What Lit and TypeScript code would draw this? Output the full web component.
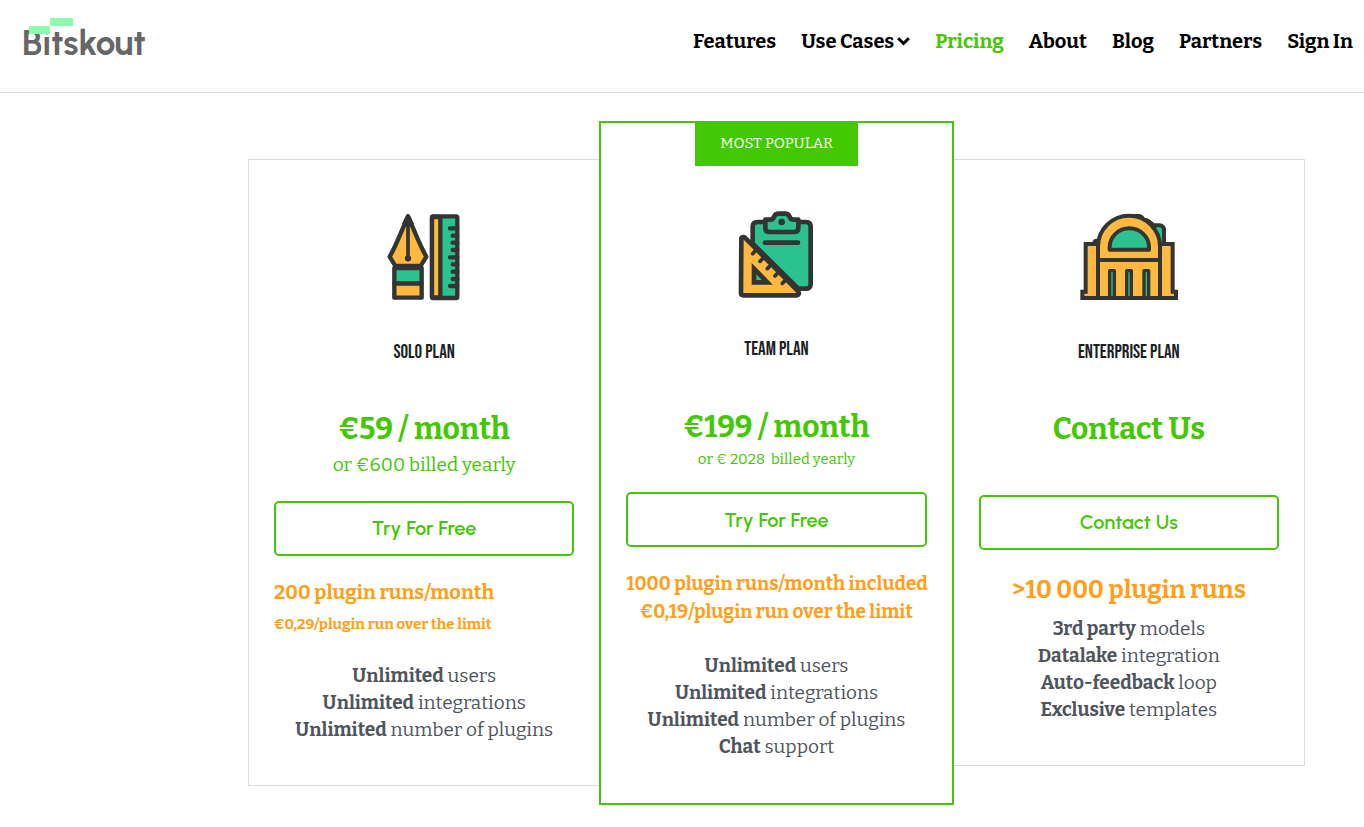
import { LitElement, html, svg, css, nothing, TemplateResult } from "lit";
import { customElement, property } from "lit/decorators.js";

interface Plan {
  id: string;
  name: string;
  badge?: string;
  icon: TemplateResult;
  price: string;
  billing?: string;
  action: string;
  notes: string[];
  features: [string, string][];
}

const INK = "#333533";
const GREEN = "#2bc28f";
const AMBER = "#ffb940";

const penIcon = svg`
  <svg class="art" viewBox="13 21 300 300" aria-hidden="true" stroke="${INK}" stroke-width="13" stroke-linejoin="round" stroke-linecap="round">
    <path fill="${AMBER}" d="M115 49C101 78 82 132 60 170L77 198H153L170 170C148 132 129 78 115 49Z"/>
    <path fill="${INK}" d="M104 72L115 49L126 72Z"/>
    <path d="M115 60V174" fill="none" stroke-width="11"/>
    <circle cx="115" cy="175" r="5" fill="${INK}" stroke-width="9"/>
    <path fill="${GREEN}" d="M74 204H156V251H74Z"/>
    <path fill="${AMBER}" d="M74 251H156V293H74Z"/>
    <rect x="187" y="49" width="76" height="245" rx="4" fill="${GREEN}"/>
    <path fill="${AMBER}" d="M187 51H212V292H187Z"/>
    <path fill="none" d="M263 85H241M263 107H249M263 128H249M263 150H249M263 172H241M263 193H249M263 215H249M263 237H249M263 258H241"/>
  </svg>`;

const clipboardIcon = svg`
  <svg class="art" viewBox="17 13 300 300" aria-hidden="true" stroke="${INK}" stroke-width="14" stroke-linejoin="round" stroke-linecap="round">
    <path fill="${GREEN}" d="M112 67H257Q271 67 271 82V252Q271 267 256 267H234L97 132V82Q97 67 112 67Z"/>
    <path fill="${GREEN}" d="M135 60H149Q158 60 161 51Q165 42 175 42H194Q204 42 208 51Q211 60 220 60H234V84Q234 97 221 97H148Q135 97 135 84Z"/>
    <circle cx="184" cy="67" r="10" fill="${INK}" stroke="none"/>
    <path d="M134 129H233" fill="none"/>
    <path fill="${AMBER}" d="M63 115Q70 109 76 116L233 274Q240 285 229 287H69Q62 287 62 280Z"/>
    <path fill="none" stroke-width="11" d="M107 151L97 162M130 174L119 185M152 196L141 207M174 218L164 229M197 240L186 251"/>
    <path fill="${GREEN}" stroke-linejoin="miter" d="M101 207V248H141Z"/>
  </svg>`;

const buildingIcon = svg`
  <svg class="art" viewBox="26 21 300 300" aria-hidden="true" stroke="${INK}" stroke-width="12" stroke-linejoin="round" stroke-linecap="round">
    <path fill="${GREEN}" d="M170 48H207Q216 50 219 60Q232 58 240 68L250 76H268Q281 78 281 91V132H230Z"/>
    <path fill="${INK}" d="M195 48H209L219 62L237 66L242 76L251 75L252 90L220 60Z" stroke-width="6"/>
    <path fill="${INK}" d="M83 120Q71 115 68 129H83Z" stroke-width="5"/>
    <path fill="${AMBER}" stroke-linejoin="miter" d="M46 132H307V275H317V294H36V275H46Z"/>
    <path fill="${AMBER}" d="M83 180V140A93 93 0 0 1 269 140V180Z"/>
    <path fill="none" d="M83 140V291M269 140V291M83 180H269"/>
    <path fill="${GREEN}" d="M118 149V142A58 56 0 0 1 236 142V149Z"/>
    <path fill="${GREEN}" stroke-width="10" d="M118 293V212H132V293ZM169 293V212H183V293ZM221 293V212H235V293Z"/>
  </svg>`;

const plans: Plan[] = [
  {
    id: "solo",
    name: "SOLO PLAN",
    icon: penIcon,
    price: "€59 / month",
    billing: "or €600 billed yearly",
    action: "Try For Free",
    notes: ["200 plugin runs/month", "€0,29/plugin run over the limit"],
    features: [
      ["Unlimited", "users"],
      ["Unlimited", "integrations"],
      ["Unlimited", "number of plugins"],
    ],
  },
  {
    id: "team",
    name: "TEAM PLAN",
    badge: "MOST POPULAR",
    icon: clipboardIcon,
    price: "€199 / month",
    billing: "or € 2028 \u00a0billed yearly",
    action: "Try For Free",
    notes: ["1000 plugin runs/month included", "€0,19/plugin run over the limit"],
    features: [
      ["Unlimited", "users"],
      ["Unlimited", "integrations"],
      ["Unlimited", "number of plugins"],
      ["Chat", "support"],
    ],
  },
  {
    id: "enterprise",
    name: "ENTERPRISE PLAN",
    icon: buildingIcon,
    price: "Contact Us",
    action: "Contact Us",
    notes: [">10 000 plugin runs"],
    features: [
      ["3rd party", "models"],
      ["Datalake", "integration"],
      ["Auto-feedback", "loop"],
      ["Exclusive", "templates"],
    ],
  },
];

@customElement("site-header")
export class SiteHeader extends LitElement {
  static styles = css`
    :host {
      display: block;
      border-bottom: 1px solid #dcdcdc;
    }
    .bar {
      display: flex;
      justify-content: space-between;
      align-items: flex-start;
      height: 92px;
      box-sizing: border-box;
      padding: 8px 11px 0 20px;
    }
    .logo {
      display: block;
      width: 140px;
      height: 64px;
    }
    .wordmark {
      font: 700 35px Urbanist, Lato, sans-serif;
      fill: #666;
    }
    .nav {
      display: flex;
      gap: 25px;
      padding-top: 19px;
    }
    .link {
      display: flex;
      align-items: center;
      gap: 3px;
      font: 700 20px/28px "Bitter", "DejaVu Serif Condensed", "DejaVu Serif", serif;
      color: #000;
      text-decoration: none;
      white-space: nowrap;
    }
    .current {
      color: #43c803;
    }
    .chevron {
      width: 13px;
      height: 10px;
    }
  `;

  private links = ["Features", "Use Cases", "Pricing", "About", "Blog", "Partners", "Sign In"];

  render() {
    return html`
      <header class="bar">
        <a href="#home" aria-label="Bitskout">
          <svg class="logo" viewBox="0 0 140 64">
            <text class="wordmark" x="2" y="47">Bitskout</text>
            <path fill="#8dfcae" d="M9 18H30V26H9ZM30 10H53V18H30Z" />
          </svg>
        </a>
        <nav class="nav">
          ${this.links.map(
            (label) => html`<a
              class="link ${label === "Pricing" ? "current" : ""}"
              href="#${label.toLowerCase().replace(" ", "-")}"
              >${label}${label === "Use Cases"
                ? html`<svg class="chevron" viewBox="0 0 13 10" aria-hidden="true">
                    <path d="M1.2 2.2L6.5 7.5L11.8 2.2" fill="none" stroke="#000" stroke-width="3" />
                  </svg>`
                : nothing}</a
            >`
          )}
        </nav>
      </header>
    `;
  }
}

@customElement("plan-card")
export class PlanCard extends LitElement {
  static styles = css`
    :host {
      display: block;
    }
    .card {
      display: flex;
      flex-direction: column;
      box-sizing: border-box;
      margin: 38px 0 0;
      padding: 47px 25px 42px;
      border: 1px solid #dcdcdc;
      background: #fff;
      text-align: center;
      font-family: "Bitter", "DejaVu Serif Condensed", "DejaVu Serif", serif;
    }
    .team {
      margin: 0 -1px;
      padding: 0 25px 43px;
      border: 2px solid #43c803;
    }
    .badge {
      align-self: center;
      margin-bottom: 38px;
      padding: 0 25px 2px;
      background: #43c803;
      color: #fff;
      font-size: 15px;
      line-height: 41px;
      white-space: nowrap;
    }
    .art {
      display: block;
      align-self: center;
      width: 100px;
      height: 100px;
    }
    .name {
      margin: 34px 0 44px;
      font: 500 19px/24px "Bebas Neue", "Liberation Sans Narrow", "Roboto Condensed", "Liberation Sans", sans-serif;
      color: #1c1f23;
    }
    .team .name {
      margin-bottom: 45px;
    }
    .price {
      margin: 0;
      font-size: 30px;
      line-height: 40px;
      font-weight: 700;
      color: #43c803;
      white-space: nowrap;
    }
    .billing {
      margin: 4px 0 0;
      font-size: 19px;
      line-height: 24px;
      color: #43c803;
      white-space: nowrap;
    }
    .team .billing {
      margin-top: 2px;
      font-size: 15px;
      line-height: 20px;
    }
    .action {
      height: 55px;
      margin: 24px 0 22px;
      padding: 0 0 2px;
      border: 2px solid #43c803;
      border-radius: 5px;
      background: #fff;
      color: #43c803;
      font: 600 20px/24px "Urbanist", Lato, sans-serif;
      cursor: pointer;
    }
    .team .action {
      margin: 23px 0;
      padding: 0;
    }
    .enterprise .action {
      margin-top: 46px;
    }
    .note {
      margin: 0;
      font-size: 19px;
      line-height: 28px;
      font-weight: 700;
      color: #ff9f1c;
      white-space: nowrap;
    }
    .solo .note {
      text-align: left;
      font-size: 20px;
    }
    .solo .note + .note {
      margin-top: 4px;
      font-size: 15px;
    }
    .enterprise .note {
      font-size: 25px;
      line-height: 36px;
    }
    .features {
      margin: 24px 0 0;
      padding: 0;
      list-style: none;
      font-size: 19px;
      line-height: 27px;
      color: #50555c;
      white-space: nowrap;
    }
    .strong {
      font-weight: 700;
    }
    .team .features {
      margin-top: 26px;
    }
    .enterprise .features {
      margin-top: 7px;
    }
  `;

  @property({ attribute: false }) plan!: Plan;

  render() {
    const p = this.plan;
    return html`
      <article class="card ${p.id}">
        ${p.badge ? html`<div class="badge">${p.badge}</div>` : nothing}
        ${p.icon}
        <h2 class="name">${p.name}</h2>
        <p class="price">${p.price}</p>
        ${p.billing ? html`<p class="billing">${p.billing}</p>` : nothing}
        <button class="action" type="button">${p.action}</button>
        ${p.notes.map((n) => html`<p class="note">${n}</p>`)}
        <ul class="features">
          ${p.features.map(([strong, rest]) => html`<li><b class="strong">${strong}</b> ${rest}</li>`)}
        </ul>
      </article>
    `;
  }
}

@customElement("app-root")
export class AppRoot extends LitElement {
  static styles = css`
    :host {
      display: block;
      background: #fff;
    }
    .plans {
      display: grid;
      grid-template-columns: repeat(3, minmax(0, 1fr));
      align-items: start;
      padding: 28px 59px 22px 248px;
    }
    .featured {
      z-index: 1;
    }
  `;

  render() {
    return html`
      <site-header></site-header>
      <main class="plans">
        ${plans.map((p) => html`<plan-card class=${p.badge ? "featured" : ""} .plan=${p}></plan-card>`)}
      </main>
    `;
  }
}
